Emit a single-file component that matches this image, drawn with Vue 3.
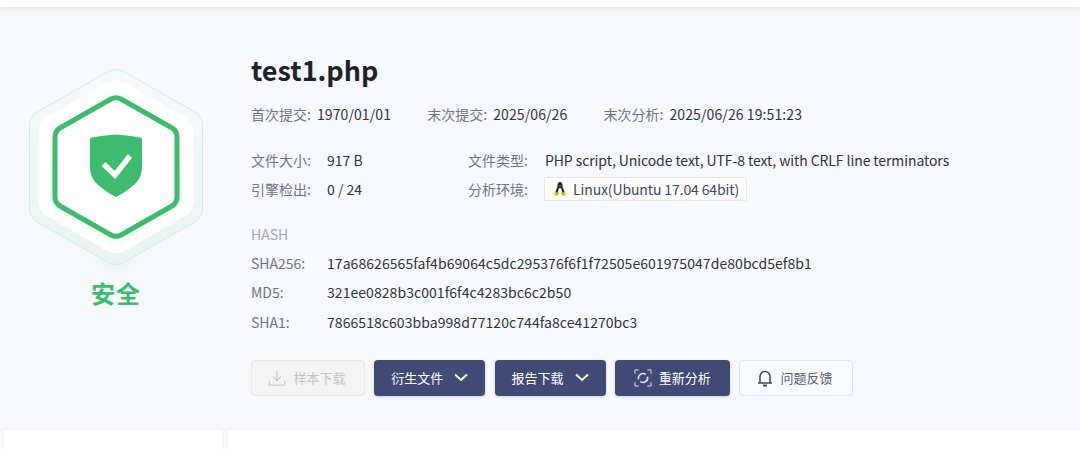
<script setup>
const dates = [
  { label: '首次提交:', value: '1970/01/01' },
  { label: '末次提交:', value: '2025/06/26' },
  { label: '末次分析:', value: '2025/06/26 19:51:23' },
]
const hashes = [
  { label: 'SHA256:', value: '17a68626565faf4b69064c5dc295376f6f1f72505e601975047de80bcd5ef8b1' },
  { label: 'MD5:', value: '321ee0828b3c001f6f4c4283bc6c2b50' },
  { label: 'SHA1:', value: '7866518c603bba998d77120c744fa8ce41270bc3' },
]
</script>

<template>
  <div class="page">
    <header class="topbar"></header>
    <main class="summary">
      <aside class="verdict">
        <svg class="hex" width="190" height="216" viewBox="0 0 190 216">
          <defs>
            <filter id="glow" x="-30%" y="-30%" width="160%" height="160%">
              <feGaussianBlur stdDeviation="6" />
            </filter>
            <filter id="halo" x="-30%" y="-30%" width="160%" height="160%">
              <feGaussianBlur stdDeviation="9" />
            </filter>
            <linearGradient id="rim" x1="0" y1="0" x2="0" y2="1">
              <stop offset="0" stop-color="#f7f9fe" />
              <stop offset="0.45" stop-color="#f0f7f8" />
              <stop offset="1" stop-color="#e8f4f2" />
            </linearGradient>
          </defs>
          <path d="M95 60 L170 130 L95 208 L20 130 Z" fill="#3dbb6e" opacity="0.07" filter="url(#halo)" />
          <path d="M87.500 4.500 Q95 0.500 102.500 4.500 L174 45 Q181.500 50 181.500 58 L181.500 142 Q181.500 150 174 155 L102.500 195.500 Q95 199.500 87.500 195.500 L16 155 Q8.500 150 8.500 142 L8.500 58 Q8.500 50 16 45 Z" fill="url(#rim)" stroke="#d3ece4" stroke-width="1" />
          <path d="M87 15.500 Q95 11.500 103 15.500 L163 50 Q173 56 173 66 L173 134 Q173 144 163 150 L103 184.500 Q95 188.500 87 184.500 L27 150 Q17 144 17 134 L17 66 Q17 56 27 50 Z" fill="#fff" />
          <path d="M95 60 L155 100 L155 134 L95 172 L35 134 L35 100 Z" fill="#3dbb6e" opacity="0.35" filter="url(#glow)" />
          <path d="M90 32 Q95 29.500 100 32 L151 61 Q156 64 156 70 L156 130 Q156 136 151 139 L100 168 Q95 170.500 90 168 L39 139 Q34 136 34 130 L34 70 Q34 64 39 61 Z" fill="#fff" stroke="#3dbb6e" stroke-width="5" />
          <path d="M95 67.500 Q108 68 121 71 L121 100 Q121 111 113 118 Q105 125 95 130 Q85 125 77 118 Q69 111 69 100 L69 71 Q82 68 95 67.500 Z" fill="#3dbb6e" />
          <path d="M82.500 97 L94 108 L109 89" fill="none" stroke="#fff" stroke-width="5.500" />
        </svg>
        <div class="verdict-text">安全</div>
      </aside>

      <section class="details">
        <h1 class="title">test1.php</h1>
        <div class="dates">
          <div v-for="d in dates" :key="d.label" class="date">
            <span class="label">{{ d.label }}</span><span class="value">{{ d.value }}</span>
          </div>
        </div>

        <div class="facts">
          <span class="label">文件大小:</span><span class="value">917 B</span>
          <span class="label">文件类型:</span><span class="value tight">PHP script, Unicode text, UTF-8 text, with CRLF line terminators</span>
          <span class="label">引擎检出:</span><span class="value">0 / 24</span>
          <span class="label">分析环境:</span>
          <span class="env">
            <svg width="14" height="16" viewBox="0 0 14 16">
              <path d="M7 1 C5 1 4.500 3 4.500 5 C4.500 7 2.500 9 2.500 11.500 L4 13 L10 13 L11.500 11.500 C11.500 9 9.500 7 9.500 5 C9.500 3 9 1 7 1 Z" fill="#222" />
              <path d="M7 6.500 C5.700 7.500 4.800 9.500 4.800 11 C4.800 12.500 5.800 13 7 13 C8.200 13 9.200 12.500 9.200 11 C9.200 9.500 8.300 7.500 7 6.500 Z" fill="#fff" />
              <path d="M6 4.500 L8 4.500 L7 5.800 Z" fill="#f5b301" />
              <path d="M1 12 L4.500 11 L5.200 14.500 L2 14.800 Z M13 12 L9.500 11 L8.800 14.500 L12 14.800 Z" fill="#f5b301" />
            </svg>
            <span class="env-text">Linux(Ubuntu 17.04 64bit)</span>
          </span>
        </div>

        <div class="hash-head">HASH</div>
        <div class="hashes">
          <template v-for="h in hashes" :key="h.label">
            <span class="label">{{ h.label }}</span><span class="value wide-text">{{ h.value }}</span>
          </template>
        </div>

        <div class="actions">
          <button class="btn disabled w114 nudge">
            <svg width="18" height="18" viewBox="0 0 20 20" fill="none" stroke="#c9c9c9" stroke-width="1.300">
              <path d="M10 2 V13 M5.500 8.500 L10 13 L14.500 8.500 M1.500 13 V18 H18.500 V13" />
            </svg>
            样本下载
          </button>
          <button class="btn primary w111">
            衍生文件
            <svg class="chev" width="14" height="9" viewBox="0 0 14 9" fill="none" stroke="#fff" stroke-width="2">
              <path d="M1 1.500 L7 7 L13 1.500" />
            </svg>
          </button>
          <button class="btn primary w111">
            报告下载
            <svg class="chev" width="14" height="9" viewBox="0 0 14 9" fill="none" stroke="#fff" stroke-width="2">
              <path d="M1 1.500 L7 7 L13 1.500" />
            </svg>
          </button>
          <button class="btn primary w115">
            <svg width="18" height="18" viewBox="0 0 19 19" fill="none" stroke="#e6e8f0" stroke-width="1">
              <path d="M1 5 V1 H5 M14 1 H18 V5 M18 14 V18 H14 M5 18 H1 V14" />
              <path d="M4.700 11 A5 5 0 0 1 12.500 5.800 M14.300 8 A5 5 0 0 1 6.500 13.200" stroke-width="1.600" />
            </svg>
            重新分析
          </button>
          <button class="btn ghost w114 nudge">
            <svg width="16" height="18" viewBox="0 0 16 18" fill="none" stroke="#3d4663" stroke-width="1.500">
              <path d="M1 14 H15 M3 14 V7.500 A5 5 0 0 1 13 7.500 V14" />
              <path d="M6 16.500 H10" stroke-width="1.800" />
            </svg>
            问题反馈
          </button>
        </div>
      </section>
    </main>
    <div class="lower">
      <div class="card side"></div>
      <div class="card wide"></div>
    </div>
  </div>
</template>

<style>
html, body { margin: 0; background: #f7f9fe; overflow: hidden; }
</style>

<style scoped>
.page {
  width: 1080px;
  height: 449px;
  overflow: hidden;
  background: #f7f9fe;
  font-family: "Noto Sans CJK SC", "Noto Sans", sans-serif;
  font-size: 14px;
  color: #30333b;
}
.topbar {
  height: 7px;
  background: #fff;
  box-shadow: 0 1px 6px rgba(50, 60, 90, 0.16);
}
.summary {
  display: flex;
  height: 423px;
  box-sizing: border-box;
}
.verdict {
  width: 232px;
  flex: none;
  padding-top: 60px;
  display: flex;
  flex-direction: column;
  align-items: center;
}
.hex { display: block; height: 216px; }
.verdict-text {
  margin-top: -8px;
  font-size: 24px;
  line-height: 36px;
  font-weight: 700;
  color: #3dbb6e;
  letter-spacing: 1px;
}
.details {
  padding-left: 19px;
  flex: 1;
}
.title {
  margin: 41px 0 0;
  font-size: 27px;
  line-height: 44px;
  font-weight: 700;
  color: #1f2229;
}
.dates {
  display: flex;
  gap: 36.250px;
  margin-top: 11px;
  line-height: 22px;
}
.label { color: #70747f; }
.value { color: #30333b; }
.date .label { margin-right: 6px; }
.date .value { letter-spacing: 0.100px; }
.tight { letter-spacing: -0.090px; }
.wide-text { letter-spacing: 0.060px; }
.facts {
  display: grid;
  grid-template-columns: 76px 141px 77px 1fr;
  grid-auto-rows: 29px;
  align-items: center;
  margin-top: 20px;
}
.env {
  justify-self: start;
  margin-left: -1px;
  display: inline-flex;
  align-items: center;
  gap: 6px;
  height: 24px;
  padding: 0 7px 0 8px;
  box-sizing: border-box;
  background: #fff;
  border: 1px solid #e3e6ee;
  border-radius: 2px;
  color: #3d4663;
}
.env-text { letter-spacing: -0.120px; }
.hash-head {
  margin-top: 20px;
  line-height: 22px;
  color: #a3a6b0;
}
.hashes {
  display: grid;
  grid-template-columns: 76px 1fr;
  grid-auto-rows: 29.500px;
  align-items: center;
  margin-top: 3px;
}
.actions {
  display: flex;
  gap: 9.250px;
  margin-top: 23px;
}
.btn {
  height: 36px;
  box-sizing: border-box;
  display: inline-flex;
  align-items: center;
  justify-content: center;
  gap: 7px;
  padding: 0;
  border-radius: 4px;
  font: inherit;
  font-size: 13px;
  border: 1px solid transparent;
}
.nudge { padding-right: 2px; }
.w114 { width: 114px; }
.w111 { width: 111px; }
.w115 { width: 115px; }
.disabled {
  background: #f4f4f4;
  border-color: #e8e8e8;
  color: #c4c4c4;
}
.primary {
  background: #3f4a75;
  color: #fff;
  box-shadow: 0 1px 3px rgba(60, 70, 110, 0.25);
}
.chev { margin-left: 4px; }
.ghost {
  background: #f9fafe;
  border-color: #e1e4ee;
  color: #575d72;
}
.lower {
  display: flex;
  gap: 6px;
  padding-left: 4px;
}
.card {
  height: 60px;
  background: #fff;
  box-shadow: 0 0 3px rgba(60, 70, 110, 0.08);
}
.side { width: 218px; }
.wide { flex: 1; }
</style>
